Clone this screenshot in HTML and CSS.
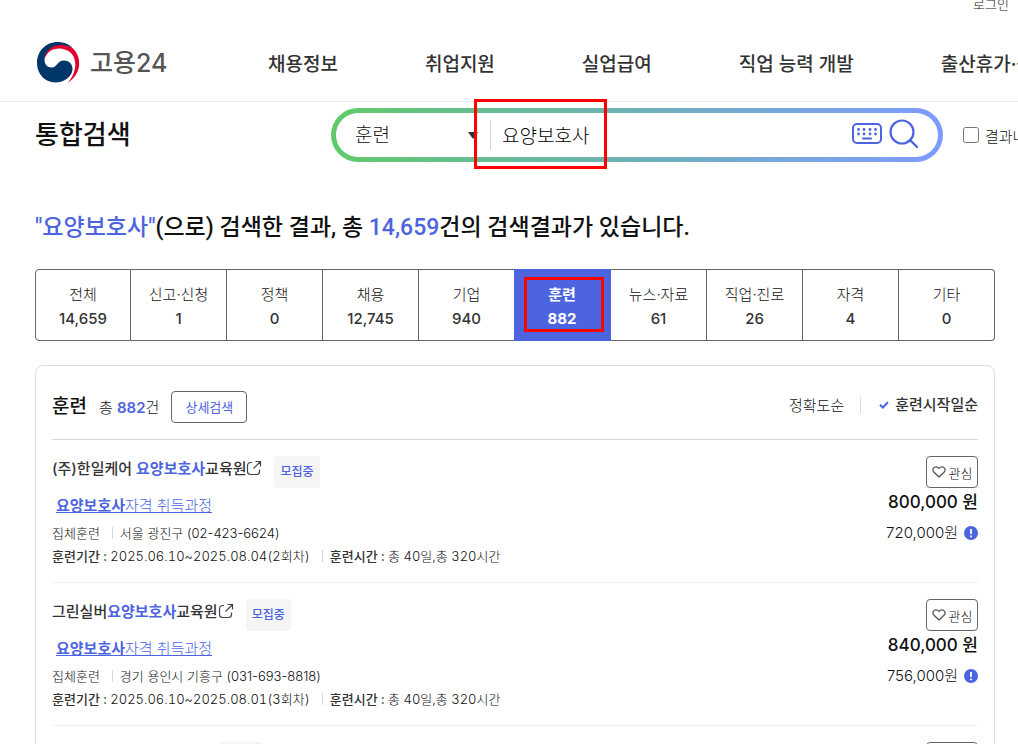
FILE: index.html
```html
<!DOCTYPE html>
<html lang="ko">
<head>
  <meta charset="UTF-8">
  <meta name="viewport" content="width=device-width, initial-scale=1.0">
  <title>통합검색 - 고용24</title>
  <link rel="stylesheet" href="styles.css">
</head>
<body>

  <svg class="sprite" aria-hidden="true">
    <symbol id="icon-link" viewBox="0 0 16 16">
      <path d="M6 2.500H4.500a3 3 0 0 0-3 3v6a3 3 0 0 0 3 3h6a3 3 0 0 0 3-3V9.500M9.500 1.500h5v5M14 2L7.500 8.500" fill="none" stroke="#444" stroke-width="1.200"/>
    </symbol>
    <symbol id="icon-heart" viewBox="0 0 14 12">
      <path d="M7 11L2 6.200C-.6 3.400 2 .8 4 .8c1.300 0 2.300.6 3 1.700C7.700 1.400 8.700.8 10 .8c2 0 4.600 2.600 2 5.400z" fill="none" stroke="#555" stroke-width="1.300" stroke-linejoin="round"/>
    </symbol>
    <symbol id="icon-info" viewBox="0 0 14 14">
      <circle cx="7" cy="7" r="7" fill="#4d64e0"/>
      <path d="M7 3v5M7 9.500v1.700" stroke="#fff" stroke-width="1.800"/>
    </symbol>
  </svg>

  <div class="util">
    <a href="#">로그인</a>
  </div>

  <header class="header">
    <a href="#" class="logo">
      <svg width="43" height="41" viewBox="0 0 43 41" aria-hidden="true">
        <path d="M7.500 18C7 8 14 2.500 23 2.500C29 2.500 33 4 36 6.500C45 15 45 32 30.500 41C39 32 41 18 34 11C26 3.500 10 5 7.500 18Z" fill="#e4032e"/>
        <path d="M35.500 6C31 3.500 27 3 23 3C13 3.500 7.500 11 7.500 18C7.500 22.500 10.500 25.500 14.500 25.500C20.500 25.500 20 18.500 27 18.500C32 18.500 35.500 22 35.500 27C35.500 34.500 27 40.500 18.500 40.500C8 40.500 0 32 0 21C0 9 9 0 20.500 0C26.500 0 32 2 35.500 6Z" fill="#003668"/>
      </svg>
      <span>고용24</span>
    </a>
    <nav class="nav">
      <a href="#">채용정보</a>
      <a href="#">취업지원</a>
      <a href="#">실업급여</a>
      <a href="#">직업 능력 개발</a>
      <a href="#">출산휴가·육아휴직</a>
    </nav>
  </header>

  <section class="search">
    <h1>통합검색</h1>
    <form class="search-bar">
      <div class="select-box">
        <select aria-label="검색 구분">
          <option>훈련</option>
        </select>
        <span class="caret"></span>
      </div>
      <div class="keyword">
        <input type="text" value="요양보호사" aria-label="검색어">
        <span class="mark mark-keyword"></span>
      </div>
      <button type="button" class="icon-btn" aria-label="가상 키보드">
        <svg width="30" height="24" viewBox="0 0 30 24">
          <rect x="1" y="1" width="28" height="19" rx="4" fill="none" stroke="#4d64e0" stroke-width="2"/>
          <g fill="#4d64e0">
            <circle cx="6.500" cy="6.500" r="1.400"/><circle cx="12" cy="6.500" r="1.400"/><circle cx="18" cy="6.500" r="1.400"/><circle cx="23.500" cy="6.500" r="1.400"/>
            <circle cx="6.500" cy="11" r="1.400"/><circle cx="12" cy="11" r="1.400"/><circle cx="18" cy="11" r="1.400"/><circle cx="23.500" cy="11" r="1.400"/>
          </g>
          <path d="M11 15.500h8" stroke="#4d64e0" stroke-width="2" stroke-linecap="round"/>
        </svg>
      </button>
      <button type="submit" class="icon-btn" aria-label="검색">
        <svg width="30" height="32" viewBox="0 0 30 32">
          <circle cx="13" cy="13" r="11.500" fill="none" stroke="#4d64e0" stroke-width="2.200"/>
          <path d="M21 21l7 7" stroke="#4d64e0" stroke-width="2.400" stroke-linecap="round"/>
        </svg>
      </button>
    </form>
    <div class="research">
      <input type="checkbox" id="research">
      <label for="research">결과내 재검색</label>
    </div>
  </section>

  <main class="container">
    <h2 class="summary"><em>"요양보호사"</em>(으로) 검색한 결과, 총 <em>14,659</em>건의 검색결과가 있습니다.</h2>

    <div class="tabs">
      <button type="button">전체<strong>14,659</strong></button>
      <button type="button">신고·신청<strong>1</strong></button>
      <button type="button">정책<strong>0</strong></button>
      <button type="button">채용<strong>12,745</strong></button>
      <button type="button">기업<strong>940</strong></button>
      <button type="button" class="active">훈련<strong>882</strong><span class="mark mark-tab"></span></button>
      <button type="button">뉴스·자료<strong>61</strong></button>
      <button type="button">직업·진로<strong>26</strong></button>
      <button type="button">자격<strong>4</strong></button>
      <button type="button">기타<strong>0</strong></button>
    </div>

    <section class="card">
      <div class="card-head">
        <h3>훈련</h3>
        <p>총 <em>882</em>건</p>
        <button type="button" class="detail-btn">상세검색</button>
        <div class="sort">
          <button type="button">정확도순</button>
          <button type="button" class="on">
            <svg width="10" height="8" viewBox="0 0 10 8" aria-hidden="true"><path d="M1 3.800L3.800 6.500L9 1.200" fill="none" stroke="#4d64e0" stroke-width="2"/></svg>
            훈련시작일순
          </button>
        </div>
      </div>

      <article class="item">
        <div class="info">
          <div class="org">
            <a href="#">(주)한일케어 <em>요양보호사</em>교육원<svg width="16" height="16"><use href="#icon-link"/></svg></a>
            <span class="badge">모집중</span>
          </div>
          <a href="#" class="course"><b>요양보호사</b>자격 취득과정</a>
          <p class="meta"><span>집체훈련</span><span>서울 광진구 (02-423-6624)</span></p>
          <p class="meta period"><span><b>훈련기간 :</b> 2025.06.10~2025.08.04(2회차)</span><span><b>훈련시간 :</b> 총 40일,총 320시간</span></p>
        </div>
        <div class="side">
          <button type="button" class="like"><svg width="14" height="12" aria-hidden="true"><use href="#icon-heart"/></svg>관심</button>
          <strong>800,000 원</strong>
          <p>720,000원 <svg width="14" height="14"><use href="#icon-info"/></svg></p>
        </div>
      </article>

      <article class="item">
        <div class="info">
          <div class="org">
            <a href="#">그린실버<em>요양보호사</em>교육원<svg width="16" height="16"><use href="#icon-link"/></svg></a>
            <span class="badge">모집중</span>
          </div>
          <a href="#" class="course"><b>요양보호사</b>자격 취득과정</a>
          <p class="meta"><span>집체훈련</span><span>경기 용인시 기흥구 (031-693-8818)</span></p>
          <p class="meta period"><span><b>훈련기간 :</b> 2025.06.10~2025.08.01(3회차)</span><span><b>훈련시간 :</b> 총 40일,총 320시간</span></p>
        </div>
        <div class="side">
          <button type="button" class="like"><svg width="14" height="12" aria-hidden="true"><use href="#icon-heart"/></svg>관심</button>
          <strong>840,000 원</strong>
          <p>756,000원 <svg width="14" height="14"><use href="#icon-info"/></svg></p>
        </div>
      </article>

      <article class="item">
        <div class="info">
          <div class="org">
            <a href="#">미래<em>요양보호사</em>교육원<svg width="16" height="16"><use href="#icon-link"/></svg></a>
            <span class="badge">모집중</span>
          </div>
        </div>
        <div class="side">
          <button type="button" class="like"><svg width="14" height="12" aria-hidden="true"><use href="#icon-heart"/></svg>관심</button>
        </div>
      </article>
    </section>
  </main>

</body>
</html>
```
FILE: styles.css
```css
* {
  box-sizing: border-box;
}

body {
  margin: 0;
  height: 100vh;
  overflow: hidden;
  font-family: Inter, "Noto Sans CJK KR", sans-serif;
  font-size: 15px;
  font-weight: 300;
  color: #111;
  background-color: #fff;
}

h1, h2, h3, p {
  margin: 0;
}

a {
  color: inherit;
  text-decoration: none;
}

em {
  font-style: normal;
  color: #4d64e0;
}

button, input, select {
  font: inherit;
  color: inherit;
}

button {
  padding: 0;
  border: none;
  background: none;
  cursor: pointer;
}

.sprite {
  position: absolute;
  width: 0;
  height: 0;
}

/* header */
.util {
  display: flex;
  justify-content: flex-end;
  align-items: flex-end;
  height: 14px;
  padding-right: 9px;
  font-size: 13px;
  line-height: 20px;
}

.header {
  display: flex;
  align-items: center;
  height: 88px;
  padding: 10px 0 0 37px;
  border-bottom: 1px solid #eaebee;
  overflow: hidden;
}

.logo {
  display: flex;
  flex: 0 0 231px;
  align-items: center;
  gap: 10px;
  font-size: 25px;
  font-weight: 500;
  line-height: 36px;
  color: #555;
}

.nav {
  display: flex;
  gap: 87px;
  font-size: 19px;
  font-weight: 500;
  white-space: nowrap;
  color: #333;
}

/* search */
.search {
  display: flex;
  align-items: center;
  padding: 6px 0 0 35px;
}

.search h1 {
  flex: 0 0 296px;
  font-size: 26px;
  font-weight: 500;
  line-height: 40px;
}

.search-bar {
  display: flex;
  flex: 1;
  align-items: center;
  height: 54px;
  padding: 0 19px;
  border: 5px solid transparent;
  border-radius: 27px;
  background: linear-gradient(#fff, #fff) padding-box, linear-gradient(90deg, #5fcb6b, #6fb0b8 50%, #7e9bff) border-box;
}

.select-box {
  display: flex;
  align-items: center;
  width: 136px;
  height: 30px;
  padding-right: 12px;
  border-right: 1px solid #d8d8d8;
  font-size: 19px;
}

.select-box select {
  flex: 1;
  padding: 0;
  border: none;
  background: none;
  appearance: none;
}

.caret {
  border: 5px solid transparent;
  border-top: 7px solid #333;
  border-bottom: none;
}

.keyword {
  position: relative;
  flex: 1;
  font-size: 19px;
  color: #000;
}

.keyword input {
  width: 100%;
  padding: 0 11px;
  border: none;
  outline: none;
  background: none;
}

.icon-btn {
  display: flex;
  margin-left: 7px;
}

.research {
  display: flex;
  align-items: center;
  gap: 6px;
  width: 75px;
  padding-left: 20px;
  white-space: nowrap;
  overflow: hidden;
}

.research input {
  flex: none;
  width: 16px;
  height: 16px;
  margin: 0;
}

/* red boxes over the keyword and the chosen tab */
.mark {
  position: absolute;
  border: 3px solid #f00;
  pointer-events: none;
}

.mark-keyword {
  top: 50%;
  left: -17px;
  width: 133px;
  height: 70px;
  margin-top: -36px;
}

.mark-tab {
  inset: 7px 6px 8px 10px;
}

/* results */
.container {
  padding: 0 23px 0 35px;
}

.summary {
  padding: 48px 0 24px;
  font-family: Roboto, "Noto Sans CJK KR", sans-serif;
  font-size: 23px;
  font-weight: 500;
  line-height: 35px;
}

.tabs {
  display: grid;
  grid-template-columns: repeat(10, 1fr);
}

.tabs button {
  position: relative;
  height: 72px;
  padding-top: 4px;
  border: 1px solid #666;
  border-left: none;
  line-height: 24px;
}

.tabs button:first-child {
  border-left: 1px solid #666;
  border-radius: 4px 0 0 4px;
}

.tabs button:last-child {
  border-radius: 0 4px 4px 0;
}

.tabs strong {
  display: block;
  font-weight: 500;
  color: #333;
}

.tabs .active {
  margin-left: -1px;
  border-color: #4d64e0;
  background-color: #4d64e0;
  color: #fff;
  font-weight: 700;
}

.tabs .active strong {
  font-weight: 700;
  color: #fff;
}

.card {
  margin-top: 24px;
  padding: 0 16px;
  border: 1px solid #dcdcdc;
  border-radius: 8px;
}

.card-head {
  display: flex;
  align-items: center;
  height: 74px;
  padding-top: 8px;
  border-bottom: 1px solid #d8d8d8;
}

.card-head h3 {
  padding-bottom: 4px;
  font-size: 19px;
  font-weight: 500;
}

.card-head p {
  margin: 0 12px;
}

.card-head em {
  font-weight: 600;
}

.detail-btn {
  width: 76px;
  height: 32px;
  border: 1px solid #666;
  border-radius: 4px;
  font-size: 13px;
  font-weight: 400;
  color: #4d64e0;
}

.sort {
  display: flex;
  align-items: center;
  margin-left: auto;
  padding-bottom: 4px;
}

.sort .on {
  display: flex;
  align-items: center;
  gap: 6px;
  margin-left: 16px;
  padding-left: 18px;
  border-left: 1px solid #d8d8d8;
  line-height: 16px;
  font-weight: 500;
  color: #333;
}

.item {
  display: flex;
  justify-content: space-between;
  height: 143px;
  padding-top: 16px;
  border-bottom: 1px solid #f0f0f0;
}

.org {
  display: flex;
  gap: 12px;
  height: 32px;
  font-weight: 500;
  line-height: 26px;
  color: #333;
}

.org em {
  font-weight: 700;
}

.org svg {
  vertical-align: -2px;
}

.badge {
  padding: 0 6px;
  border-radius: 4px;
  background-color: #f5f5f5;
  font-size: 12px;
  line-height: 32px;
  color: #4d64e0;
}

.course {
  display: block;
  margin: 6px 0 4px 4px;
  line-height: 24px;
  color: #4d64e0;
  text-decoration: underline;
}

.course b {
  font-weight: 700;
}

.meta {
  display: flex;
  align-items: center;
  font-size: 13px;
  line-height: 23px;
}

.period {
  font-variant-numeric: tabular-nums;
}

.meta b {
  font-weight: 500;
  color: #333;
}

.meta span + span::before {
  content: "";
  display: inline-block;
  height: 12px;
  margin: 0 7px 0 12px;
  border-left: 1px solid #d8d8d8;
  vertical-align: -1px;
}

.side {
  display: flex;
  flex-direction: column;
  align-items: flex-end;
}

.like {
  display: flex;
  justify-content: center;
  align-items: center;
  gap: 3px;
  width: 52px;
  height: 32px;
  border: 1px solid #666;
  border-radius: 4px;
  font-size: 13px;
}

.side strong {
  font-size: 17px;
  font-weight: 500;
  line-height: 28px;
}

.side p {
  display: flex;
  align-items: center;
  gap: 6px;
  line-height: 34px;
}
```
